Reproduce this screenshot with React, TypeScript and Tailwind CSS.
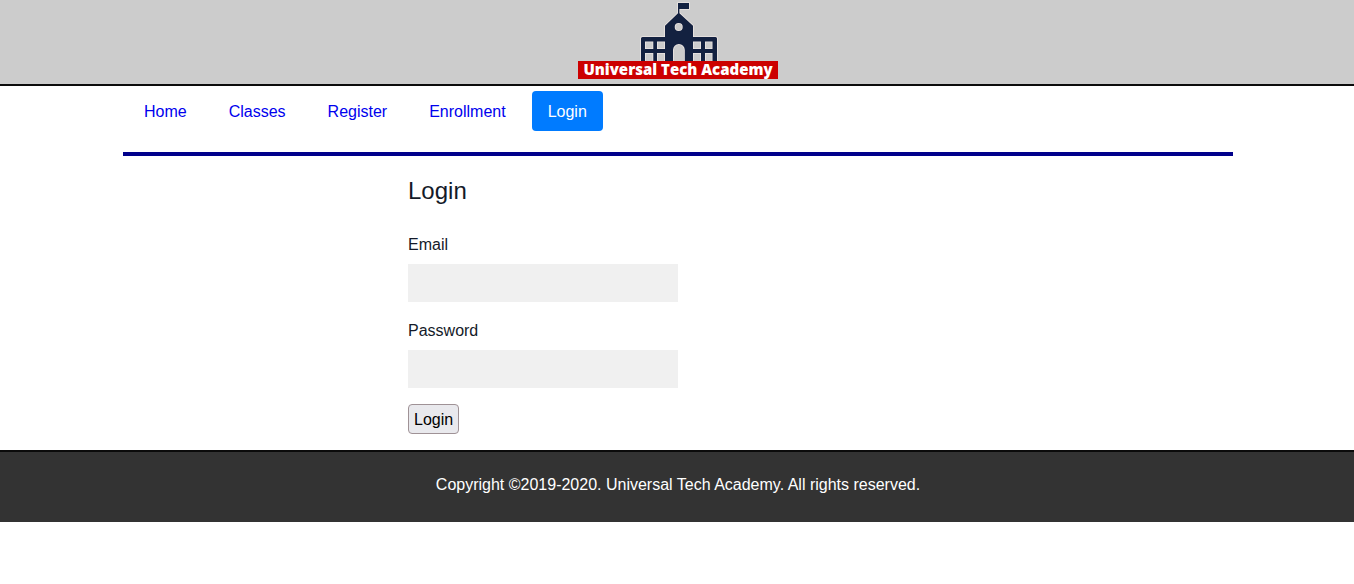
const links = ["Home", "Classes", "Register", "Enrollment"];

function Logo() {
  return (
    <svg viewBox="0 0 200 80" className="block h-20 w-[200px]" role="img" aria-label="Universal Tech Academy">
      <g fill="#132140" stroke="#ebe5e2" strokeWidth="1.6" paintOrder="stroke" fillRule="evenodd">
        <path d="M100 3h11v6h-9.6v4.2L115 25.8V37h22.5q1.5 0 1.5 1.5V62H63V38.5q0-1.5 1.5-1.5H87V25.8L100 13.2z M67 41.5v7.5h8.3v-7.5z M79 41.5v7.5h8v-7.5z M67 53v9h8.3v-9z M79 53v9h8v-9z M115 41.5v7.5h8v-7.5z M127 41.5v7.5h7.5v-7.5z M115 53v9h8v-9z M127 53v9h7.5v-9z M95 62V50a5.9 5.9 0 0 1 11.8 0V62z M96.7 27a4 4 0 1 0 8 0a4 4 0 1 0-8 0z" />
      </g>
      <rect y="61" width="200" height="18" fill="#cc0000" />
      <text x="100" y="75" textAnchor="middle" fill="#ffffff" className="font-['Open_Sans',sans-serif] text-[15px] font-extrabold">
        Universal Tech Academy
      </text>
    </svg>
  );
}

function Field({ id, label, type }: { id: string; label: string; type: string }) {
  return (
    <div className="mb-4">
      <label htmlFor={id} className="mb-[7px] block pt-px">{label}</label>
      <input id={id} name={id} type={type} className="block h-[38px] w-[270px] max-w-full bg-[#f0f0f0] px-3" />
    </div>
  );
}

export default function App() {
  return (
    <div className="bg-white font-['Liberation_Sans',Arial,sans-serif] text-base text-[#141a29]">
      <header className="flex justify-center border-b-2 border-[#0b0b0b] bg-[#cccccc] pb-1 pl-0.5">
        <Logo />
      </header>
      <div className="pl-0.5">
        <div className="mx-auto max-w-[1140px] px-[15px]">
          <nav className="flex flex-wrap gap-2.5 p-[5px]">
            {links.map((name) => (
              <a key={name} href="#" className="rounded px-4 pt-[9px] pb-[7px] text-[#0000ee]">{name}</a>
            ))}
            <a href="#" aria-current="page" className="rounded bg-[#007bff] px-4 pt-[9px] pb-[7px] text-white">Login</a>
          </nav>
          <hr className="mt-4 border-t-4 border-[#00008b]" />
          <main className="-mx-[15px] grid grid-cols-4">
            <form className="col-span-2 col-start-2 px-[15px] pt-[21px] pb-4">
              <h1 className="mb-[27px] text-2xl leading-7">Login</h1>
              <Field id="email" label="Email" type="email" />
              <Field id="password" label="Password" type="password" />
              <button type="submit" className="block rounded-[4px] border border-[#9f9296] bg-[#e9e9ed] px-[5px] pt-[3px] pb-px text-black">
                Login
              </button>
            </form>
          </main>
        </div>
      </div>
      <footer className="border-t-2 border-[#0b0b0b] bg-[#333333] pt-[21px] pb-[25px] pl-0.5 text-center text-white">
        <p>Copyright ©2019-2020. Universal Tech Academy. All rights reserved.</p>
      </footer>
    </div>
  );
}
